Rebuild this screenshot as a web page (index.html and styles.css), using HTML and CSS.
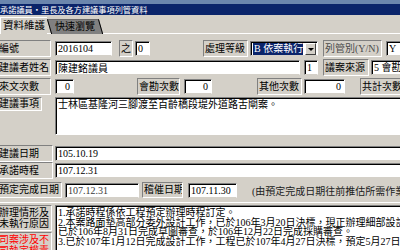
FILE: index.html
```html
<!DOCTYPE html>
<html>
<head>
<meta charset="utf-8">
<link rel="stylesheet" href="styles.css">
</head>
<body>
<div class="chrome"></div>
<div class="caption">承諾議員・里長及各方建議事項列管資料</div>
<div class="tabs">
  <div class="tab tab-active">資料維護</div>
  <div class="tab tab-inactive">快速瀏覽</div>
</div>
<div class="panel">
  <div class="row">
    <div class="lbl w-lead">編號</div>
    <div class="fld w-no">2016104</div>
    <div class="lbl w-zhi">之</div>
    <div class="fld w-sub">0</div>
    <div class="lbl w-level">處理等級</div>
    <div class="select">
      <span class="sel-text">B 依案執行</span>
      <span class="sel-btn"><span class="arrow"></span></span>
    </div>
    <div class="lbl w-yn muted">列管別(Y/N)</div>
    <div class="fld w-y">Y</div>
  </div>
  <div class="row">
    <div class="lbl w-lead">建議者姓名</div>
    <div class="fld w-name">陳建銘議員</div>
    <div class="fld w-one">1</div>
    <div class="lbl w-src">議案來源</div>
    <div class="fld w-srcv">5 會勘</div>
  </div>
  <div class="row">
    <div class="lbl w-lead">來文次數</div>
    <div class="fld num w-c1">0</div>
    <div class="lbl w-c2l">會勘次數</div>
    <div class="fld num w-c2">0</div>
    <div class="lbl w-c3l">其他次數</div>
    <div class="fld num w-c3">0</div>
    <div class="lbl w-c4l">共計次數</div>
  </div>
  <div class="row row-memo">
    <div class="lbl w-item">建議事項</div>
    <div class="memo memo-item">士林區基隆河三腳渡至百齡橋段堤外道路舌閘案。</div>
  </div>
  <div class="row row-date1">
    <div class="lbl w-date">建議日期</div>
    <div class="fld w-wide">105.10.19</div>
  </div>
  <div class="row row-date2">
    <div class="lbl w-date">承諾時程</div>
    <div class="fld w-wide">107.12.31</div>
  </div>
  <div class="row row-date3">
    <div class="lbl w-due">預定完成日期</div>
    <div class="fld w-duev dim">107.12.31</div>
    <div class="lbl w-chk">稽催日期</div>
    <div class="fld w-chkv">107.11.30</div>
    <div class="note">(由預定完成日期往前推估所需作業時間)</div>
  </div>
  <div class="sep"></div>
  <div class="row row-progress">
    <div class="lbl-col">
      <div class="lbl lbl-two">辦理情形及<br>未執行原因</div>
      <div class="lbl lbl-two red">司案涉及不<br>司執定權責</div>
    </div>
    <div class="memo memo-progress">1.承諾時程係依工程預定辦理時程訂定。<br>2.本案路面墊高部分委外設計工作，已於106年3月20日決標，現正辦理細部設計，<br>已於106年8月31日完成草圖審查，於106年12月22日完成採購審查。<br>3.已於107年1月12日完成設計工作，工程已於107年4月27日決標，預定5月27日開工。</div>
  </div>
</div>
</body>
</html>
```
FILE: styles.css
```css
* { box-sizing: border-box; }
html, body { margin: 0; padding: 0; }
body {
  width: 400px;
  height: 250px;
  overflow: hidden;
  background: #d4d0c8;
  font-family: "Liberation Serif", "Noto Sans CJK TC", serif;
  font-size: 10px;
  color: #000;
}
.chrome { height: 4px; background: #6b86ad; }
.caption {
  height: 11px;
  background: #0a246a;
  color: #fff;
  font-family: "Noto Sans CJK TC", sans-serif;
  font-size: 8.2px;
  line-height: 11px;
  white-space: nowrap;
  overflow: hidden;
}
.tabs {
  display: flex;
  align-items: flex-start;
  height: 19px;
  padding-top: 2px;
  border-bottom: 1px solid #fff;
}
.tab { font-family: "Noto Sans CJK TC", sans-serif; white-space: nowrap; }
.tab-active {
  width: 47px;
  height: 17px;
  background: #d4d0c8;
  border-top: 1px solid #fff;
  border-left: 1px solid #fff;
  padding-left: 2px;
  line-height: 14px;
  font-size: 10.5px;
  position: relative;
  z-index: 1;
}
.tab-inactive {
  width: 54px;
  height: 14px;
  margin-top: 2px;
  padding-left: 8px;
  line-height: 13px;
  position: relative;
  z-index: 0;
}
.tab-inactive::before {
  content: "";
  position: absolute;
  left: 2px;
  top: 0;
  width: 50px;
  height: 14px;
  background: #808080;
  border-left: 1px solid #000;
  border-right: 1px solid #000;
  border-top: 1px solid #6a6a6a;
  transform: skewX(16deg);
  z-index: -1;
}
.panel { padding-top: 6px; }
.row {
  display: flex;
  align-items: center;
  height: 17px;
  margin-left: -3px;
  margin-bottom: 2px;
}
.lbl {
  flex: none;
  height: 17px;
  background: #d4d0c8;
  border-top: 1px solid #808080;
  border-left: 1px solid #808080;
  border-right: 1px solid #fff;
  border-bottom: 1px solid #fff;
  line-height: 15px;
  padding-left: 1px;
  white-space: nowrap;
  overflow: hidden;
}
.muted { color: #4a4a4a; }
.fld {
  flex: none;
  height: 15px;
  background: #fff;
  border-top: 1px solid #808080;
  border-left: 1px solid #808080;
  border-right: 1px solid #fff;
  border-bottom: 1px solid #d4d0c8;
  box-shadow: inset 1px 1px 0 #000;
  line-height: 14px;
  padding-left: 2px;
  white-space: nowrap;
  overflow: hidden;
}
.num { text-align: right; padding-right: 3px; }
.dim { color: #3a3a3a; }

.w-lead { width: 54px; }
.w-no { width: 57px; margin-left: 4px; }
.w-zhi { width: 14px; margin-left: 7px; text-align: center; padding-left: 0; }
.w-sub { width: 15px; margin-left: 2px; }
.w-level { width: 45px; margin-left: 53px; }
.select {
  flex: none;
  display: flex;
  align-items: center;
  width: 68px;
  height: 15px;
  margin-left: 2px;
  background: #fff;
  border-top: 1px solid #808080;
  border-left: 1px solid #808080;
  border-right: 1px solid #fff;
  border-bottom: 1px solid #d4d0c8;
  box-shadow: inset 1px 1px 0 #000;
  padding: 1px 1px 0 2px;
}
.sel-text {
  flex: 1;
  height: 12px;
  background: #0a246a;
  color: #fff;
  line-height: 12px;
  padding-left: 1px;
  white-space: nowrap;
  overflow: hidden;
  margin-right: 2px;
}
.sel-btn {
  flex: none;
  width: 11px;
  height: 12px;
  background: #d4d0c8;
  border-top: 1px solid #fff;
  border-left: 1px solid #fff;
  border-right: 1px solid #404040;
  border-bottom: 1px solid #404040;
  display: flex;
  align-items: center;
  justify-content: center;
}
.arrow {
  width: 0;
  height: 0;
  border-left: 3px solid transparent;
  border-right: 3px solid transparent;
  border-top: 3px solid #000;
}
.w-yn { width: 59px; margin-left: 5px; }
.w-y { width: 24px; margin-left: 4px; }

.w-name { width: 245px; margin-left: 4px; font-family: "Noto Sans CJK TC", sans-serif; }
.w-one { width: 14px; margin-left: 4px; }
.w-src { width: 46px; margin-left: 5px; }
.w-srcv { width: 49px; margin-left: 2px; }

.w-c1 { width: 19px; margin-left: 4px; }
.w-c2l { width: 43px; margin-left: 63px; }
.w-c2 { width: 28px; margin-left: 4px; }
.w-c3l { width: 45px; margin-left: 45px; }
.w-c3 { width: 41px; margin-left: 2px; }
.w-c4l { width: 50px; margin-left: 15px; }

.row-memo { align-items: flex-start; height: 38px; margin-bottom: 0; }
.w-item { width: 45px; height: 14px; line-height: 12px; }
.memo {
  flex: none;
  background: #fff;
  border-top: 1px solid #808080;
  border-left: 1px solid #808080;
  border-bottom: 1px solid #fff;
  box-shadow: inset 1px 1px 0 #000;
  padding: 2px 0 0 2px;
  white-space: nowrap;
  overflow: hidden;
}
.memo-item { width: 350px; height: 38px; margin-left: 13px; line-height: 10px; }

.row-date1 { margin-top: 10px; margin-bottom: 0; }
.row-date2 { margin-bottom: 0; }
.row-date3 { margin-top: 3px; height: 16px; margin-bottom: 0; }
.row-date3 .lbl { height: 16px; line-height: 14px; }
.w-date { width: 56px; }
.w-wide { width: 355px; margin-left: 2px; }
.w-due { width: 65px; }
.w-duev { width: 74px; margin-left: 3px; }
.w-chk { width: 41px; margin-left: 3px; }
.w-chkv { width: 49px; margin-left: 5px; }
.note { flex: none; margin-left: 15px; white-space: nowrap; color: #202020; }

.sep { height: 1px; background: #fff; margin-top: 4px; }

.row-progress { align-items: flex-start; height: 50px; margin-top: 2px; }
.lbl-col { flex: none; display: flex; flex-direction: column; width: 55px; }
.lbl-two { height: 26px; line-height: 11px; padding-top: 1px; }
.lbl-two.red { height: 22px; margin-top: 1px; color: #ff0000; }
.memo-progress { width: 355px; height: 50px; margin-left: 3px; line-height: 9.6px; padding-top: 2px; }
```
